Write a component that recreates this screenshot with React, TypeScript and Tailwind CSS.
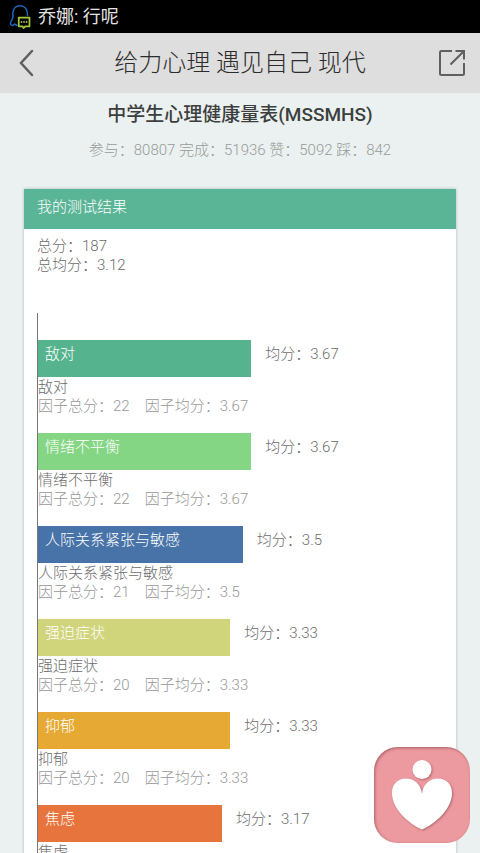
import React from "react";

const MAX_SCORE = 5;
// share of the chart's width that a full score would take
const FULL_BAR_PERCENT = 70;

interface Factor {
  name: string;
  total: number;
  average: number;
  color: string;
}

const factors: Factor[] = [
  { name: "敌对", total: 22, average: 3.67, color: "bg-[#55b48e]" },
  { name: "情绪不平衡", total: 22, average: 3.67, color: "bg-[#84d684]" },
  { name: "人际关系紧张与敏感", total: 21, average: 3.5, color: "bg-[#4873a8]" },
  { name: "强迫症状", total: 20, average: 3.33, color: "bg-[#d0d57b]" },
  { name: "抑郁", total: 20, average: 3.33, color: "bg-[#e6a933]" },
  { name: "焦虑", total: 19, average: 3.17, color: "bg-[#e6743c]" },
];

export default function App() {
  return (
    <div className="flex h-screen flex-col overflow-hidden bg-[#ebf1f0] font-['Roboto','Noto_Sans_CJK_SC',sans-serif] text-[15px] leading-[19px] font-light text-[#6c6c6c]">
      <StatusBar />
      <AppHeader />
      <main className="min-h-0 flex-1 overflow-hidden px-6 pt-2">
        <h1 className="text-center text-[19px] leading-7 font-medium text-[#3c3f3e]">
          中学生心理健康量表(MSSMHS)
        </h1>
        <p className="mt-3 text-center text-[#989b9a]">
          参与：80807 完成：51936 赞：5092 踩：842
        </p>
        <section className="mt-[29px] bg-white shadow-[0_0_3px_rgba(0,0,0,0.25)]">
          <h2 className="h-10 bg-[#5ab496] px-[13px] pt-[9px] text-white">
            我的测试结果
          </h2>
          <div className="pt-2 pl-[13px]">
            <p>总分：187</p>
            <p>总均分：3.12</p>
            <ul className="mt-[38px] border-l border-[#777777] pt-[27px]">
              {factors.map((factor) => (
                <FactorRow key={factor.name} factor={factor} />
              ))}
            </ul>
          </div>
        </section>
      </main>
      <HeartButton />
    </div>
  );
}

function StatusBar() {
  return (
    <div className="flex h-[33px] shrink-0 items-center gap-[7px] bg-black pl-[9px] text-lg font-normal text-[#e4e4e4]">
      <svg className="h-6 w-[22px]" viewBox="0 0 22 24" fill="none">
        <path
          d="M8 20.500L5.500 19L4 20.500C1.500 20.500 1 18.500 2 16.500L4 12.500C3 5.500 5.500 0.750 11 0.750C16 0.750 18.500 4.500 18.500 10.500"
          stroke="#2263b8"
          strokeWidth="1.500"
          strokeLinecap="round"
          strokeLinejoin="round"
        />
        <path
          d="M9.750 12.500H20.500V21.250H16.500L14.500 23L13.500 21.250H9.750Z"
          stroke="#a4c63c"
          strokeWidth="1.750"
          strokeLinejoin="round"
        />
        <path
          d="M11.750 17H18.500"
          stroke="#c7dc7c"
          strokeWidth="1.500"
          strokeDasharray="1.500 1"
        />
      </svg>
      <span>乔娜: 行呢</span>
    </div>
  );
}

function AppHeader() {
  return (
    <header className="flex h-[60px] shrink-0 items-center justify-between bg-[#dedede] pr-[14px] pl-[18px] text-[#5f5f5f]">
      <button type="button" aria-label="返回" className="w-6">
        <svg className="h-7 w-4" viewBox="0 0 16 28" fill="none">
          <path
            d="M14 2L3 14L14 26"
            stroke="currentColor"
            strokeWidth="2.500"
            strokeLinecap="round"
          />
        </svg>
      </button>
      <div className="truncate text-2xl text-[#2c2c2c]">
        给力心理 遇见自己 现代
      </div>
      <button type="button" aria-label="分享" className="w-7">
        <svg className="size-7" viewBox="0 0 28 28" fill="none">
          <path
            d="M14 2H3.500C2.500 2 2 2.500 2 3.500V24.500C2 25.500 2.500 26 3.500 26H24.500C25.500 26 26 25.500 26 24.500V14"
            stroke="currentColor"
            strokeWidth="2"
          />
          <path
            d="M17.500 2H26V10.500M25.500 2.500L12.500 15.500"
            stroke="currentColor"
            strokeWidth="2"
          />
        </svg>
      </button>
    </header>
  );
}

function FactorRow({ factor }: { factor: Factor }) {
  const percent = Math.floor((factor.average / MAX_SCORE) * FULL_BAR_PERCENT);

  return (
    <li className="mb-[17px]">
      <div className="flex gap-[14px]">
        <div
          className={`h-[37px] shrink-0 px-[7px] pt-[5px] text-white ${factor.color}`}
          style={{ width: `${percent}%` }}
        >
          {factor.name}
        </div>
        <span className="pt-[5px]">均分：{factor.average}</span>
      </div>
      <p className="pt-px">{factor.name}</p>
      <p className="text-[#989898]">
        因子总分：{factor.total}
        {"\u3000"}因子均分：{factor.average}
      </p>
    </li>
  );
}

function HeartButton() {
  return (
    <button
      type="button"
      aria-label="心理测试"
      className="fixed right-[10px] bottom-[10px] size-24 rounded-3xl bg-[#ec9a9f] shadow-[inset_1px_1px_3px_rgba(120,60,65,0.6)]"
    >
      <svg className="size-full" viewBox="0 0 96 96" fill="#ffffff">
        <g className="drop-shadow-[1px_1px_1px_rgba(120,60,65,0.5)]">
          <circle cx="48" cy="22.500" r="9.500" />
          <path d="M48 47C47 37 40 31.500 32 31.500C23 31.500 18 38 18 46C18 62 35 77 48 82.500C61 77 78 62 78 46C78 38 73 31.500 64 31.500C56 31.500 49 37 48 47Z" />
        </g>
      </svg>
    </button>
  );
}
